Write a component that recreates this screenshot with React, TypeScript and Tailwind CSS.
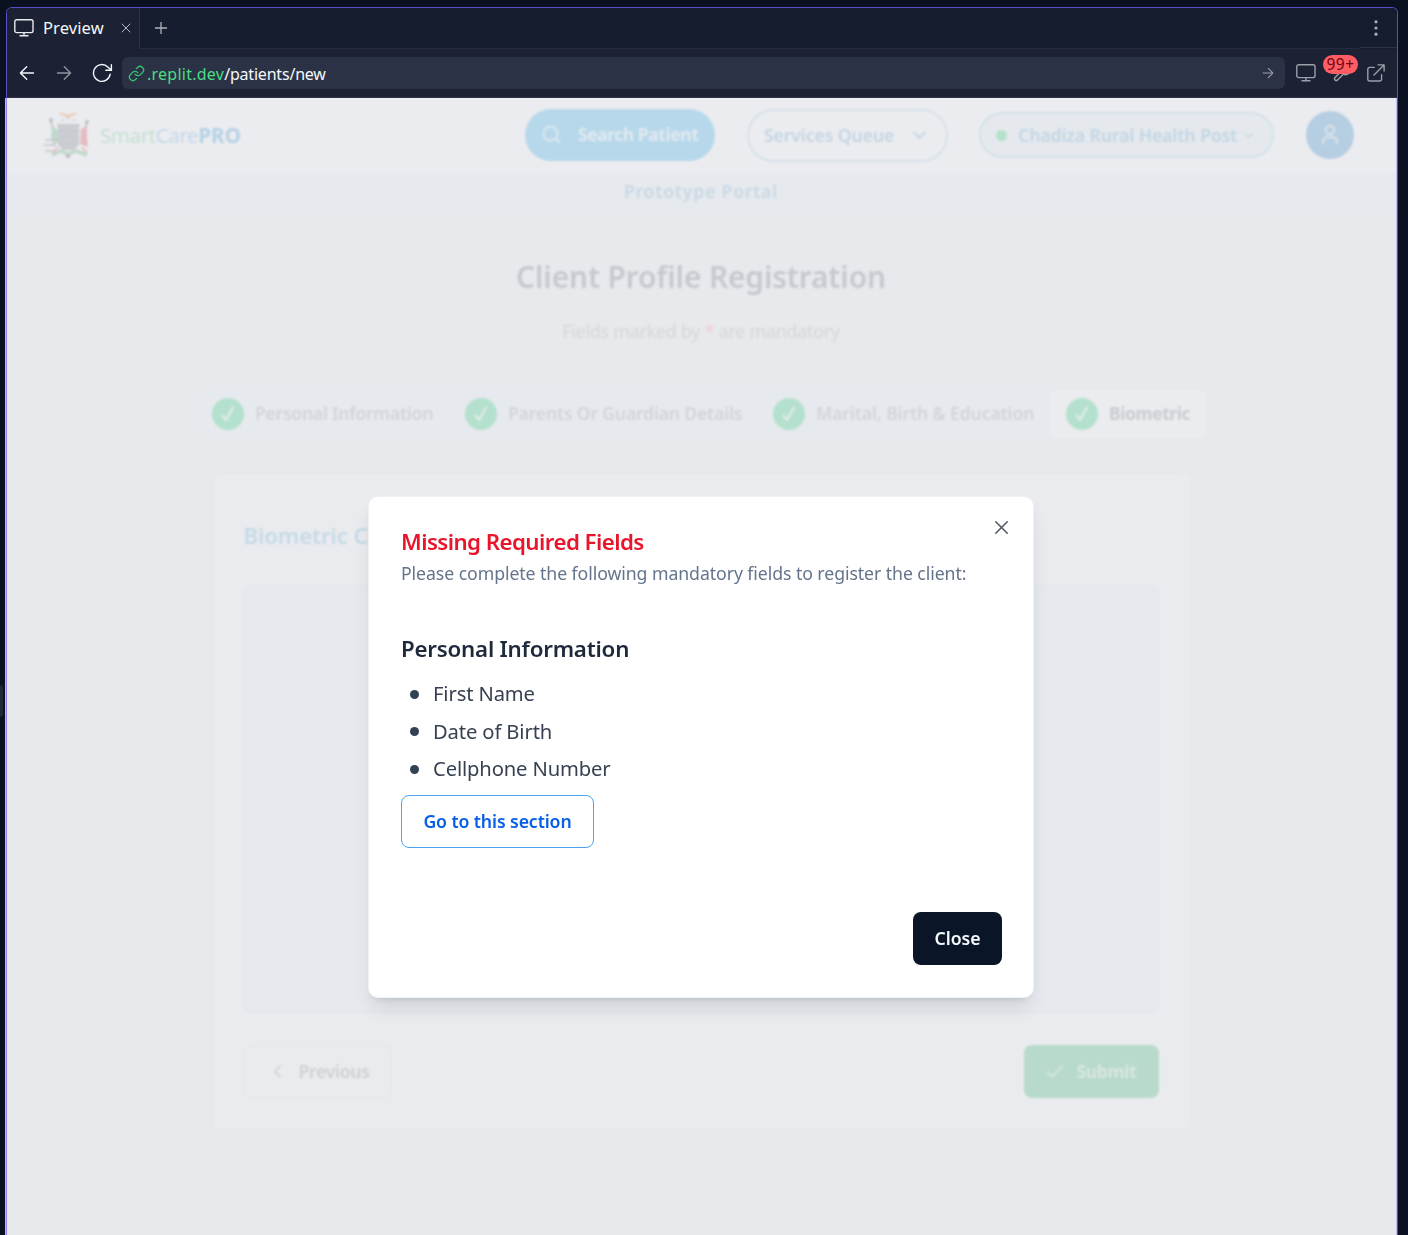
import React from "react";
import { Check, ChevronDown, ChevronLeft, Search, X } from "lucide-react";

function MonitorIcon({ className }: { className: string }) {
  return (
    <svg className={className} width="20" height="18" viewBox="0 0 20 18" fill="none" stroke="currentColor" strokeWidth="1.4" strokeLinecap="round">
      <rect x="0.8" y="0.8" width="18.2" height="12.8" rx="1.8" />
      <path d="M10 13.6v3M6 16.8h8" />
    </svg>
  );
}

function ArrowIcon({ className, size }: { className: string; size: number }) {
  return (
    <svg className={className} width={size} height={size} viewBox="0 0 16 16" fill="none" stroke="currentColor" strokeWidth="1.4" strokeLinecap="round" strokeLinejoin="round">
      <path d="M1.5 8h13M8.3 1.7 14.6 8l-6.3 6.3" />
    </svg>
  );
}

function Toolbar() {
  return (
    <div className="flex h-[49px] items-center border-b border-[#2b3245] bg-[#1c2133] pr-3 pl-3">
      <ArrowIcon className="rotate-180 text-[#f5f9fc]" size={16} />
      <ArrowIcon className="ml-[21px] text-[#8d929c]" size={16} />
      <svg className="ml-[20px] text-[#f5f9fc]" width="21" height="20" viewBox="0 0 21 20" fill="none" stroke="currentColor" strokeWidth="1.4" strokeLinecap="round" strokeLinejoin="round">
        <path d="M18.2 11.2A8.4 8.4 0 1 1 15.8 4L19.4 7.2M19.4 1.8v5.4h-5.6" />
      </svg>
      <div className="ml-[9px] flex h-8 w-[1163px] items-center rounded-md bg-[#2b3245] pr-[11px] pl-[6px]">
        <svg className="text-[#35c26c]" width="17" height="17" viewBox="0 0 24 24" fill="none" stroke="currentColor" strokeWidth="1.8" strokeLinecap="round" strokeLinejoin="round">
          <path d="M10 13a5 5 0 0 0 7.54.54l3-3a5 5 0 0 0-7.07-7.07l-1.72 1.71" />
          <path d="M14 11a5 5 0 0 0-7.54-.54l-3 3a5 5 0 0 0 7.07 7.07l1.71-1.71" />
        </svg>
        <span className="mt-px ml-[2px] text-[16px] leading-8 tracking-[0.25px] whitespace-nowrap text-[#4bdc84]">.replit.dev</span>
        <span className="mt-px text-[16px] leading-8 tracking-[-0.2px] whitespace-nowrap text-[#f5f9fc]">/patients/new</span>
        <ArrowIcon className="ml-auto text-[#9ba0a9]" size={12} />
      </div>
      <MonitorIcon className="ml-[11px] text-[#9ba0a9]" />
      <div className="relative ml-[16px] flex h-5 w-5 items-center">
        <svg className="text-[#9ba0a9]" width="20" height="20" viewBox="0 0 24 24" fill="none" stroke="currentColor" strokeWidth="1.7" strokeLinecap="round" strokeLinejoin="round">
          <path d="M14.7 6.3a1 1 0 0 0 0 1.4l1.6 1.6a1 1 0 0 0 1.4 0l3.77-3.77a6 6 0 0 1-7.94 7.94l-6.91 6.91a2.12 2.12 0 0 1-3-3l6.91-6.91a6 6 0 0 1 7.94-7.94l-3.76 3.76z" />
        </svg>
        <span className="absolute -top-[8px] -left-[9px] flex h-[19px] w-[35px] items-center justify-center rounded-full bg-[#ff5c63] text-[15.5px] tracking-[0.5px] text-[#6e0510]">99+</span>
      </div>
      <svg className="ml-[15px] text-[#9ba0a9]" width="18" height="18" viewBox="0 0 18 18" fill="none" stroke="currentColor" strokeWidth="1.4" strokeLinecap="round" strokeLinejoin="round">
        <path d="M7.2 3.4H2.6A1.8 1.8 0 0 0 .8 5.2v10a1.8 1.8 0 0 0 1.8 1.8h10.2a1.8 1.8 0 0 0 1.8-1.8v-4.6M11 .9h6.1V7M17 1 7 11" />
      </svg>
    </div>
  );
}

function TabBar() {
  return (
    <div className="flex h-[41px] bg-[#151d2e]">
      <div className="flex w-[133px] items-center border-r border-[#2b3245] bg-[#1c2133] pb-px pl-[7px]">
        <MonitorIcon className="text-[#e8ebf0]" />
        <span className="ml-[9px] w-[66px] text-[16.5px] leading-6 tracking-[0.1px] text-[#f5f9fc]">Preview</span>
        <X className="ml-[9px] text-[#b5b9c1]" size={16} strokeWidth={1.5} />
      </div>
      <div className="flex flex-1 items-center border-b border-[#232b3c] pl-[15px]">
        <svg width="12" height="12" viewBox="0 0 12 12" stroke="#aeb3bc" strokeWidth="1.3">
          <path d="M6 0v12M0 6h12" />
        </svg>
      </div>
      <div className="mb-px flex w-[37px] items-center justify-center border-b border-[#2b3245] pr-[6px]">
        <svg width="4" height="16" viewBox="0 0 4 16" fill="#a9aeb7">
          <circle cx="2" cy="1.8" r="1.6" />
          <circle cx="2" cy="8" r="1.6" />
          <circle cx="2" cy="14.2" r="1.6" />
        </svg>
      </div>
    </div>
  );
}

function CoatOfArms() {
  return (
    <svg className="-mt-px" width="48" height="48" viewBox="0 0 48 48" fill="none">
      <path d="M15 1c4 2 6 1 9 3 3-2 5-1 9-3-1 3-3 4-6 4l-3 4-3-4c-3 0-5-1-6-4Z" fill="#e8cdbb" />
      <path d="M17 9h4M28 9h4" stroke="#d3d2d4" strokeWidth="1.4" />
      <path d="M7 10l5 20M43 11l-6 22" stroke="#c6c7cb" strokeWidth="2" />
      <circle cx="7" cy="9" r="1.8" fill="#b3b4ba" />
      <circle cx="43" cy="11" r="1.8" fill="#b3b4ba" />
      <path d="M8 14l6 6v11l-5 3-2-8z" fill="#c0d9cd" />
      <path d="M43 15l-6 3-1 15 8 3-1-11z" fill="#e6bcc2" />
      <path d="M14 13h21v21l-5 5H19l-5-5z" fill="#cbccd1" />
      <path d="M13 14h23M13 20h23M14 26h21M14 32h21" stroke="#c1c2c7" strokeDasharray="3 2" />
      <path d="M18 14v21M23 14v24M28 14v23M32 14v21" stroke="#d0d1d5" />
      <path d="M1 29h13M0 34h12M1 40h11" stroke="#c4c5ca" strokeWidth="1.6" />
      <path d="M8 44l9-4 7 3 8-3 11 4" stroke="#c3d8cc" strokeWidth="3.5" />
      <path d="M14 36l-5 6M38 36l5 6" stroke="#dfc3c7" strokeWidth="2" />
      <path d="M22 43h4v4h-4z" fill="#bcc0c2" />
    </svg>
  );
}

function NavBar() {
  return (
    <div className="flex h-[75px] items-center bg-[#ebecef] pb-px pl-[37px] text-[17.5px]">
      <CoatOfArms />
      <div className="ml-[8px] w-[425px] text-[20.5px] whitespace-nowrap">
        <span className="tracking-[-0.4px] text-[#c3e0d3]">Smart</span>
        <span className="tracking-[-0.4px] text-[#c3d8e8]">Care</span>
        <span className="font-bold tracking-[0.1px] text-[#b5d1e5]">PRO</span>
      </div>
      <div className="-mt-px flex h-[52px] w-[190px] items-center rounded-full bg-[#b7d8eb] pl-4 font-bold text-[#e1eaf0]">
        <Search size={21} strokeWidth={2} />
        <span className="ml-[16px] tracking-[-0.45px] whitespace-nowrap">Search Patient</span>
      </div>
      <div className="ml-[32px] flex h-[53px] w-[201px] items-center rounded-full border-2 border-[#d5e1ea] pl-[15px] font-semibold text-[#c3d5e3]">
        <span className="w-[132px] tracking-[-0.04px] whitespace-nowrap">Services Queue</span>
        <ChevronDown className="ml-[13px]" size={21} strokeWidth={2.2} />
      </div>
      <div className="ml-[31px] flex h-[46px] w-[295px] items-center rounded-full border-2 border-[#d3e1eb] bg-[#e5e9ed] pl-[15px] font-semibold text-[#c3d6e4]">
        <span className="h-[11px] w-[11px] rounded-full bg-[#b5e1cc]" />
        <span className="ml-[11px] w-[223px] tracking-[-0.03px] whitespace-nowrap">Chadiza Rural Health Post</span>
        <ChevronDown size={15} strokeWidth={2.2} />
      </div>
      <div className="-mt-px ml-[32px] flex h-12 w-12 items-center justify-center rounded-full bg-[#b6cee1]">
        <svg width="20" height="22" viewBox="0 0 20 22" fill="none" stroke="#dce5ec" strokeWidth="1.9" strokeLinecap="round">
          <circle cx="10" cy="6" r="4.2" />
          <path d="M3 19.5v-1.4c0-3 1.8-4.8 4.6-4.8h4.8c2.8 0 4.6 1.8 4.6 4.8v1.4" />
        </svg>
      </div>
    </div>
  );
}

function StepBadge() {
  return (
    <span className="flex h-8 w-8 items-center justify-center rounded-full bg-[#b4e1cd]">
      <svg width="16" height="18" viewBox="0 0 16 18" fill="none" stroke="#e4ede9" strokeWidth="2.1" strokeLinecap="round" strokeLinejoin="round">
        <path d="M2.5 10.5 6 15 13 2.5" />
      </svg>
    </span>
  );
}

function Steps() {
  return (
    <div className="mx-auto flex h-12 w-[1000px] items-center rounded-md bg-[#e6e9ed] text-[17.5px] font-semibold whitespace-nowrap text-[#d1d4d8]">
      <div className="flex w-[253px] items-center pl-[6px]">
        <StepBadge />
        <span className="-mt-px ml-[11px] tracking-[-0.22px]">Personal Information</span>
      </div>
      <div className="flex w-[308px] items-center pl-[6px]">
        <StepBadge />
        <span className="-mt-px ml-[11px] tracking-[-0.14px]">Parents Or Guardian Details</span>
      </div>
      <div className="flex w-[283px] items-center pl-[6px]">
        <StepBadge />
        <span className="-mt-px ml-[11px] tracking-[-0.07px]">Marital, Birth &amp; Education</span>
      </div>
      <div className="flex h-12 w-[156px] items-center rounded-md bg-[#ebecef] pl-[16px] font-bold text-[#c9ccd0]">
        <StepBadge />
        <span className="-mt-px ml-[11px] tracking-[-0.43px]">Biometric</span>
      </div>
    </div>
  );
}

function RegistrationCard() {
  return (
    <div className="mx-auto mt-[35px] flex h-[657px] w-[980px] flex-col rounded-lg border border-[#e6e7ea] bg-[#eaebee] pr-[32px] pb-[31px] pl-[31px]">
      <h2 className="mt-[46px] text-[22.3px] leading-8 font-semibold tracking-[-0.13px] text-[#c4d9e7]">Biometric Capture</h2>
      <div className="mt-[33px] h-[428px] rounded-lg border border-[#e0e4e9] bg-[#e6eaee]" />
      <div className="mt-auto flex justify-between text-[17.5px]">
        <div className="flex h-[53px] w-[148px] items-center rounded-lg border border-[#e5e6ea] pl-[22px] font-semibold text-[#cdd0d4]">
          <ChevronLeft size={21} strokeWidth={2} />
          <span className="ml-[11px] tracking-[-0.24px]">Previous</span>
        </div>
        <div className="flex h-[53px] w-[135px] items-center rounded-lg bg-[#b8dacb] pl-[20px] font-bold text-[#d9e7e0]">
          <Check size={22} strokeWidth={1.8} />
          <span className="ml-[11px] tracking-[-0.33px]">Submit</span>
        </div>
      </div>
    </div>
  );
}

const missingFields = ["First Name", "Date of Birth", "Cellphone Number"];

function MissingFieldsDialog() {
  return (
    <div className="absolute top-[398px] left-[361px] flex h-[502px] w-[666px] flex-col rounded-[10px] border border-[#eef1f5] bg-white pr-[31px] pb-[32px] pl-[32px] shadow-[0_13px_20px_-4px_rgba(0,0,0,0.1),0_5px_8px_-5px_rgba(0,0,0,0.13)]">
      <X className="absolute top-[19px] right-[20px] text-[#545d6b]" size={23} strokeWidth={1.7} />
      <h2 className="mt-[33px] text-[22.3px] leading-[24px] font-semibold tracking-[-0.57px] whitespace-nowrap text-[#e8152b]">Missing Required Fields</h2>
      <p className="mt-[6px] text-[17.7px] leading-[26px] tracking-[-0.08px] whitespace-nowrap text-[#64748b]">Please complete the following mandatory fields to register the client:</p>
      <h3 className="mt-[47px] text-[22.3px] leading-8 font-semibold tracking-[-0.22px] whitespace-nowrap text-[#1e293b]">Personal Information</h3>
      <ul className="mt-[12px] text-[20.2px] leading-8 tracking-[-0.13px] whitespace-nowrap text-[#374151]">
        {missingFields.map((field) => (
          <li key={field} className="mb-[5.5px] flex items-center">
            <span className="mt-[2px] mr-[14px] ml-[9px] h-[9px] w-[9px] rounded-full bg-[#334155]" />
            {field}
          </li>
        ))}
      </ul>
      <button className="mt-[5px] flex h-[53px] w-[193px] shrink-0 items-center justify-center rounded-lg border border-[#4ba3f0] text-[17.7px] font-semibold tracking-[-0.11px] whitespace-nowrap text-[#075fe8]">Go to this section</button>
      <button className="mt-auto flex h-[53px] w-[89px] shrink-0 items-center justify-center self-end rounded-lg bg-[#0a1528] text-[17.7px] font-semibold tracking-[-0.1px] text-[#f5f8fb]">Close</button>
    </div>
  );
}

export default function App() {
  return (
    <div className="flex h-[1235px] w-[1408px] overflow-hidden bg-[#0a1222] font-['Noto_Sans','Open_Sans',sans-serif]">
      <div className="flex w-[5px] items-center pt-[167px]">
        <div className="h-8 w-[3px] rounded-r-sm bg-[#1f2837]" />
      </div>
      <div className="flex w-[1393px] flex-col pt-[7px]">
        <div className="ml-px overflow-hidden rounded-t-[6px] border border-b-0 border-[#5d4dc8]">
          <TabBar />
          <Toolbar />
        </div>
        <div className="flex flex-1 border-x border-l-[#bfbcd2] border-r-[#5f4bc4]">
          <div className="relative flex-1 border-x border-l-[#937df8] border-r-[#c8b9ee] bg-[#e8e9ec]">
            <div className="h-full overflow-hidden">
              <div className="blur-[1px]">
                <NavBar />
                <div className="h-[38px] bg-[#e6e9ed] pr-px text-center text-[17.5px] leading-[37px] font-semibold tracking-[0.85px] text-[#c7d8e5]">Prototype Portal</div>
                <h1 className="mt-[46px] pr-px text-center text-[29.9px] leading-10 font-semibold tracking-[-0.14px] text-[#c5c9cf]">Client Profile Registration</h1>
                <p className="mt-[20px] pr-px text-center text-[17.7px] leading-7 tracking-[-0.15px] text-[#d3d6da]">
                  Fields marked by <span className="text-[#efcfd3]">*</span> are mandatory
                </p>
                <div className="mt-[45px] pl-[9px]"><Steps /></div>
                <RegistrationCard />
              </div>
            </div>
            <MissingFieldsDialog />
          </div>
        </div>
      </div>
    </div>
  );
}
